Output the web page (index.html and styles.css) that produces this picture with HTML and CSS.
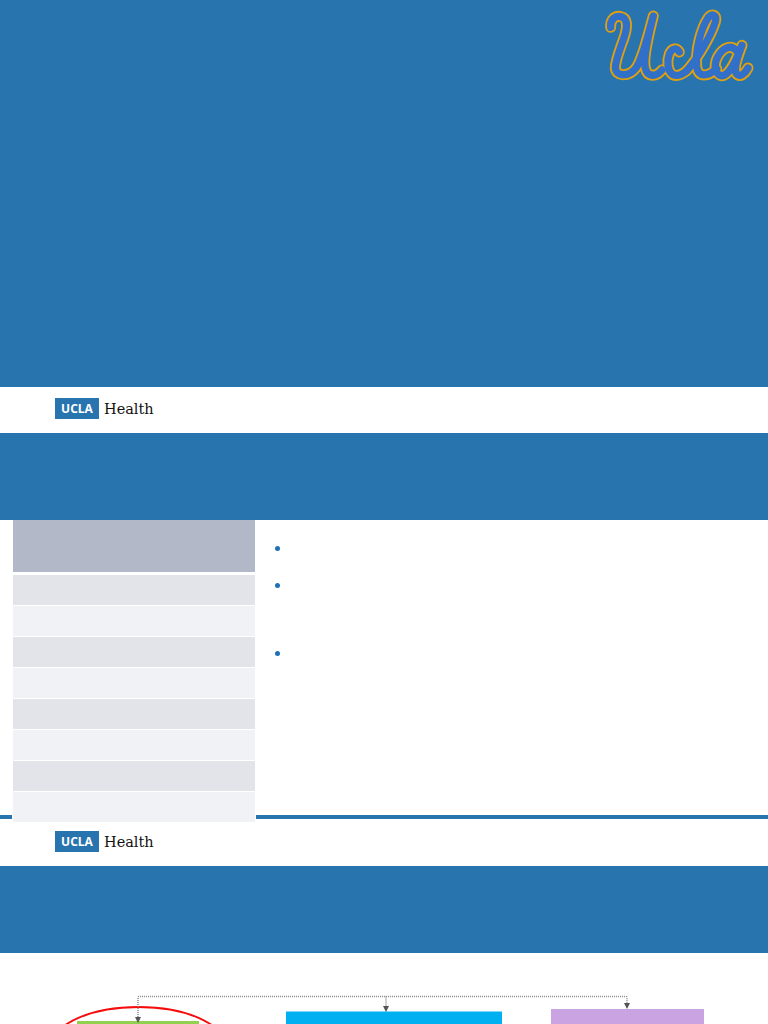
FILE: index.html
```html
<!DOCTYPE html>
<html lang="en">
<head>
<meta charset="utf-8">
<title>UCLA Health</title>
<link rel="stylesheet" href="styles.css">
</head>
<body>
<section class="cover">
  <svg class="script-logo" viewBox="0 0 534 285" aria-label="UCLA script logo">
    <g class="script-outline">
      <path d="M62 82C60 58 76 46 92 50C112 54 112 76 106 100C98 130 76 176 76 204C78 230 116 232 138 204C160 172 176 96 190 48C178 96 158 172 166 204C172 232 198 232 216 210"/>
      <path d="M268 156C260 142 246 144 238 162C230 184 232 212 248 224C262 230 276 224 290 212"/>
      <path d="M290 212C316 184 360 116 376 66C382 44 366 38 354 54C332 86 316 150 320 200C324 232 352 232 380 206"/>
      <path d="M440 152C420 130 392 146 378 182C370 210 384 232 402 226C424 216 440 176 456 136C444 170 428 204 440 222C450 234 466 220 474 204"/>
    </g>
    <g class="script-fill">
      <path d="M62 82C60 58 76 46 92 50C112 54 112 76 106 100C98 130 76 176 76 204C78 230 116 232 138 204C160 172 176 96 190 48C178 96 158 172 166 204C172 232 198 232 216 210"/>
      <path d="M268 156C260 142 246 144 238 162C230 184 232 212 248 224C262 230 276 224 290 212"/>
      <path d="M290 212C316 184 360 116 376 66C382 44 366 38 354 54C332 86 316 150 320 200C324 232 352 232 380 206"/>
      <path d="M440 152C420 130 392 146 378 182C370 210 384 232 402 226C424 216 440 176 456 136C444 170 428 204 440 222C450 234 466 220 474 204"/>
    </g>
  </svg>
</section>
<footer class="brand-bar">
  <span class="brand-box">UCLA</span>
  <span class="brand-name">Health</span>
</footer>

<header class="slide-head"></header>
<section class="content">
  <div class="data-table">
    <div class="cell cell-head"></div>
    <div class="cell cell-dark"></div>
    <div class="cell cell-light"></div>
    <div class="cell cell-dark"></div>
    <div class="cell cell-light"></div>
    <div class="cell cell-dark"></div>
    <div class="cell cell-light"></div>
    <div class="cell cell-dark"></div>
    <div class="cell cell-light"></div>
  </div>
  <ul class="bullets">
    <li class="bullet b-one"></li>
    <li class="bullet b-two"></li>
    <li class="bullet"></li>
  </ul>
</section>
<footer class="brand-bar brand-bar-tight">
  <span class="brand-box">UCLA</span>
  <span class="brand-name">Health</span>
</footer>

<header class="slide-head"></header>
<section class="diagram">
  <svg class="diagram-art" viewBox="0 0 768 71">
    <ellipse class="ring" cx="138.500" cy="91" rx="85" ry="37"/>
    <rect class="box-green" x="77" y="68" width="122" height="10"/>
    <rect class="box-cyan" x="286" y="58.500" width="216" height="20"/>
    <rect class="box-purple" x="551" y="56" width="153" height="20"/>
    <path class="link" d="M138 64V44.500Q138 43.500 139 43.500H626Q627 43.500 627 45V50M386 43.500V54"/>
    <path class="arrow" d="M135 64H141L138 70ZM383 53H389L386 59ZM624 50H630L627 56Z"/>
  </svg>
</section>
</body>
</html>
```

FILE: styles.css
```css
* {
  box-sizing: border-box;
}

html,
body {
  margin: 0;
  padding: 0;
  height: 1024px;
  overflow: hidden;
  background: #fff;
  font-family: "Liberation Sans", Arial, sans-serif;
}

.cover {
  height: 387px;
  background: #2774ae;
  display: flex;
  justify-content: flex-end;
}

.script-logo {
  width: 178px;
  height: 95px;
  display: block;
}

.script-logo path {
  fill: none;
  stroke-linecap: round;
  stroke-linejoin: round;
}

.script-outline path {
  stroke: #e0a010;
  stroke-width: 33;
}

.script-fill path {
  stroke: #3070c8;
  stroke-width: 22;
}

.brand-bar {
  height: 46px;
  background: #fff;
  display: flex;
  align-items: center;
  padding: 0 0 3px 55px;
  gap: 5px;
}

.brand-bar-tight {
  height: 47px;
  padding-bottom: 2px;
}

.brand-box {
  width: 44px;
  height: 21px;
  background: #2774ae;
  color: #fff;
  font-family: "Open Sans", "Liberation Sans", sans-serif;
  font-size: 12px;
  font-weight: 700;
  line-height: 21px;
  text-align: center;
}

.brand-name {
  font-family: "DejaVu Serif", "Liberation Serif", serif;
  font-size: 14.500px;
  color: #111;
}

.slide-head {
  height: 87px;
  background: #2774ae;
}

.content {
  height: 299px;
  border-bottom: 4px solid #2774ae;
  display: flex;
  background: #fff;
}

.data-table {
  position: relative;
  width: 244px;
  height: 303px;
  margin-left: 12px;
  background: #fff;
  padding: 0 1px;
  display: flex;
  flex-direction: column;
  gap: 1px;
  flex: none;
}

.cell {
  flex: none;
  height: 30px;
}

.cell-head {
  height: 52px;
  margin-bottom: 2px;
  background: #b3b8c9;
}

.cell-dark {
  background: #e3e4e9;
}

.cell-light {
  background: #f1f2f5;
}

.bullets {
  list-style: none;
  margin: 0;
  padding: 26px 0 0 19px;
}

.bullet {
  width: 5px;
  height: 5px;
  border-radius: 50%;
  background: #1f70b8;
}

.b-one {
  margin-bottom: 32px;
}

.b-two {
  margin-bottom: 63px;
}

.diagram {
  height: 71px;
  background: #fff;
}

.diagram-art {
  display: block;
  width: 768px;
  height: 71px;
}

.ring {
  fill: none;
  stroke: #f60c0c;
  stroke-width: 2;
}

.box-green {
  fill: #92d050;
}

.box-cyan {
  fill: #00b0f0;
}

.box-purple {
  fill: #c9a3e2;
}

.link {
  fill: none;
  stroke: #888;
  stroke-width: 1.500;
  stroke-dasharray: 1 1;
}

.arrow {
  fill: #555;
}
```
